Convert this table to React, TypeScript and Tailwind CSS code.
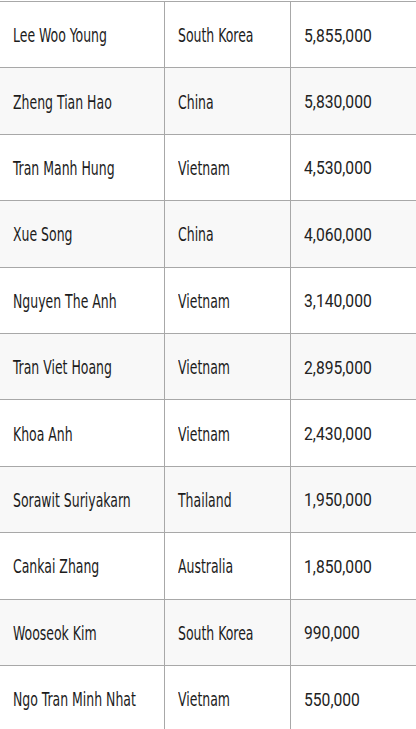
import React from "react";

const rows: [string, string, string][] = [
  ["Lee Woo Young", "South Korea", "5,855,000"],
  ["Zheng Tian Hao", "China", "5,830,000"],
  ["Tran Manh Hung", "Vietnam", "4,530,000"],
  ["Xue Song", "China", "4,060,000"],
  ["Nguyen The Anh", "Vietnam", "3,140,000"],
  ["Tran Viet Hoang", "Vietnam", "2,895,000"],
  ["Khoa Anh", "Vietnam", "2,430,000"],
  ["Sorawit Suriyakarn", "Thailand", "1,950,000"],
  ["Cankai Zhang", "Australia", "1,850,000"],
  ["Wooseok Kim", "South Korea", "990,000"],
  ["Ngo Tran Minh Nhat", "Vietnam", "550,000"],
];

function Cond({ children }: { children: React.ReactNode }) {
  return (
    <span className="inline-block whitespace-nowrap origin-left scale-x-[0.73] text-[19px] leading-none text-[#1c1c1c] font-['DejaVu_Sans_Condensed','DejaVu_Sans',sans-serif]">
      {children}
    </span>
  );
}

export default function App() {
  return (
    <div className="w-[416px] h-[729px] overflow-hidden bg-white pt-px">
      {rows.map((r, i) => (
        <div
          key={i}
          className={`flex h-[66.4px] border-t border-[#a8a8a8] text-[#222222] ${i % 2 === 1 ? "bg-[#f8f8f8]" : "bg-white"}`}
        >
          <div className="w-[164px] shrink-0 flex items-center pl-[13px] pt-[2px] overflow-hidden">
            <Cond>{r[0]}</Cond>
          </div>
          <div className="w-[126px] shrink-0 flex items-center pl-[13px] pt-[2px] border-l border-[#a8a8a8] overflow-hidden">
            <Cond>{r[1]}</Cond>
          </div>
          <div className="flex-1 flex items-center pl-[13px] pt-[2px] border-l border-[#a8a8a8]">
            <span className="inline-block whitespace-nowrap origin-left scale-x-[0.87] text-[18px] leading-none font-['Roboto',sans-serif]">
              {r[2]}
            </span>
          </div>
        </div>
      ))}
    </div>
  );
}
